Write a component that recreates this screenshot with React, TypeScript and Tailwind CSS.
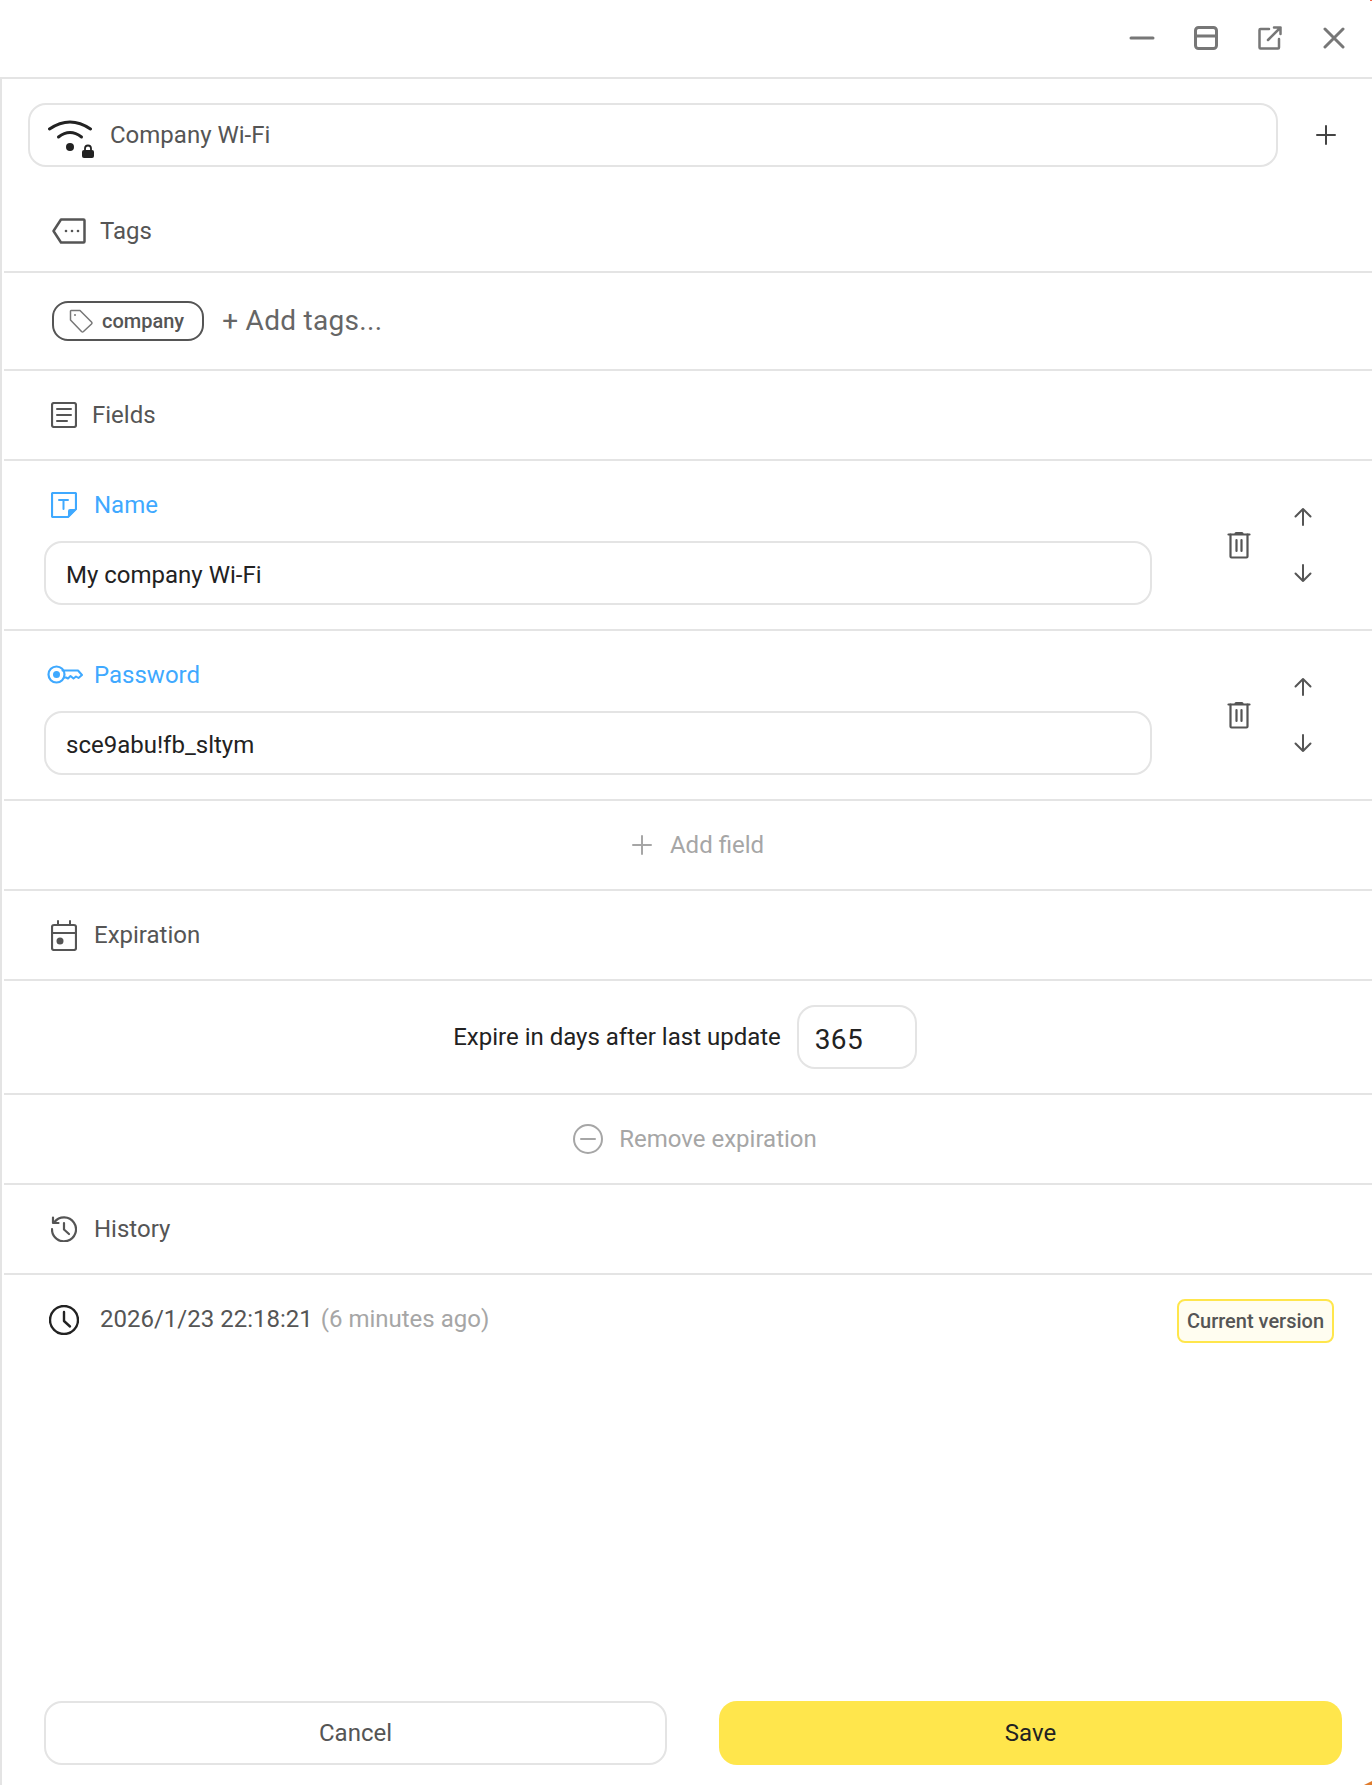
import React from 'react';

const IconBox: React.FC<{ w: number; h: number; className?: string; children: React.ReactNode }> = ({ w, h, className, children }) => (
  <svg width={w} height={h} viewBox={`0 0 ${w} ${h}`} fill="none" stroke="currentColor" strokeWidth={2} strokeLinecap="round" strokeLinejoin="round" className={className}>
    {children}
  </svg>
);

const WifiLockIcon = () => (
  <IconBox w={46} h={38} className="text-[#222] shrink-0 mt-[15px]">
    <path d="M1.500 9Q22 -5 42.500 9" strokeWidth={3} />
    <path d="M10.500 17Q22 8 33.500 17" strokeWidth={3} />
    <circle cx={22} cy={27} r={4} fill="currentColor" stroke="none" />
    <path d="M37 31v-2.500a3 3 0 0 1 6 0V31" strokeWidth={1.8} />
    <rect x={34} y={30} width={12} height={8} rx={2} fill="currentColor" stroke="none" />
  </IconBox>
);

const TagsIcon = () => (
  <IconBox w={34} h={26} className="text-[#555] shrink-0 ml-[1px]">
    <path d="M9 1.500H31.500a1 1 0 0 1 1 1V23.500a1 1 0 0 1-1 1H9L1.500 13Z" strokeWidth={2.500} />
    <circle cx={14} cy={13} r={1.300} fill="currentColor" stroke="none" />
    <circle cx={20} cy={13} r={1.300} fill="currentColor" stroke="none" />
    <circle cx={26} cy={13} r={1.300} fill="currentColor" stroke="none" />
  </IconBox>
);

const ChipTagIcon = () => (
  <IconBox w={24} h={24} className="text-[#777] shrink-0">
    <path d="M2 1.500H11L22.500 13a1.500 1.500 0 0 1 0 2L14.500 22.500a1.500 1.500 0 0 1-2 0L1.500 11V2Z" strokeWidth={1.5} />
    <circle cx={6} cy={6} r={1} fill="currentColor" stroke="none" />
  </IconBox>
);

const FieldsIcon = () => (
  <IconBox w={26} h={26} className="text-[#555] shrink-0">
    <rect x={1} y={1} width={24} height={24} rx={2} strokeWidth={2.200} />
    <path d="M6 7H20M6 13H20M6 19H16" />
  </IconBox>
);

const NameIcon = () => (
  <IconBox w={26} h={26} className="text-[#3fa9ff] shrink-0">
    <path d="M2 1H24a1 1 0 0 1 1 1V17L17 25H2a1 1 0 0 1-1-1V2a1 1 0 0 1 1-1Z" strokeWidth={2.200} />
    <path d="M25 17V18L18 25H17V19a2 2 0 0 1 2-2Z" fill="currentColor" stroke="none" />
    <path d="M8 8H17M12.500 8V17" />
  </IconBox>
);

const KeyIcon = () => (
  <IconBox w={36} h={20} className="text-[#3fa9ff] shrink-0">
    <path d="M15.500 5.500H31L35 10L31.500 13L29 11.500L26.500 13.500L23.500 11L21 13.500L19 12.500H17" />
    <circle cx={9.500} cy={9.500} r={8} strokeWidth={2.200} />
    <circle cx={9.500} cy={9.500} r={3.500} fill="currentColor" stroke="none" />
  </IconBox>
);

const TrashIcon = () => (
  <IconBox w={24} h={28} className="text-[#555]">
    <path d="M1.500 3.500H22.500" strokeWidth={2.200} />
    <path d="M9 2.500H15" strokeWidth={3} />
    <path d="M3.500 3.500V25.500a1 1 0 0 0 1 1H19.500a1 1 0 0 0 1-1V3.500" strokeWidth={2.200} />
    <path d="M9.500 9V20M14.500 9V20" strokeWidth={2.200} />
  </IconBox>
);

const ArrowIcon: React.FC<{ down?: boolean }> = ({ down }) => (
  <IconBox w={20} h={20} className="text-[#555]">
    {down ? <path d="M10 2V18M2.500 10.500L10 18L17.500 10.500" /> : <path d="M10 18V2M2.500 9.500L10 2L17.500 9.500" />}
  </IconBox>
);

const CalendarIcon = () => (
  <IconBox w={26} h={31} className="text-[#555] shrink-0">
    <rect x={1} y={5} width={24} height={25} rx={2} strokeWidth={2.200} />
    <path d="M1 13H25M7 1V5M19 1V5" />
    <circle cx={9} cy={21} r={3.500} fill="currentColor" stroke="none" />
  </IconBox>
);

const HistoryIcon = () => (
  <IconBox w={26} h={26} className="text-[#555] shrink-0">
    <path d="M3.500 6A12 12 0 1 1 1 13" strokeWidth={2.200} />
    <path d="M2 1.500V7H7.500" strokeWidth={2.200} />
    <path d="M13 7V13.500L18 18" strokeWidth={2.200} />
  </IconBox>
);

const ClockIcon = () => (
  <IconBox w={30} h={30} className="text-[#222] shrink-0">
    <circle cx={15} cy={15} r={14} strokeWidth={2.400} />
    <path d="M15 7V16L21 21.500" strokeWidth={2.400} />
  </IconBox>
);

const SectionRow: React.FC<{ icon: React.ReactNode; label: string; gap: string; h?: string }> = ({ icon, label, gap, h = 'h-[90px]' }) => (
  <div className={`${h} border-b-2 border-[#e4e4e4] flex items-center pl-[47px] text-[24px] text-[#555] ${gap}`}>
    {icon}
    <span>{label}</span>
  </div>
);

const FieldRow: React.FC<{ icon: React.ReactNode; label: string; value: string; gap: string }> = ({ icon, label, value, gap }) => (
  <div className="h-[170px] border-b-2 border-[#e4e4e4] flex items-center pl-[40px]">
    <div className="w-[1108px] flex flex-col gap-[23px] pt-[6px]">
      <div className={`h-[26px] mt-[1px] flex items-center text-[24px] text-[#3fa9ff] ${gap}`}>
        {icon}
        <span>{label}</span>
      </div>
      <div className="h-[64px] border-2 border-[#e4e4e4] rounded-[18px] flex items-center pl-[20px] pt-[4px] text-[24px] text-[#222]">{value}</div>
    </div>
    <div className="ml-[75px] w-[24px] flex justify-center">
      <TrashIcon />
    </div>
    <div className="ml-[42px] flex flex-col gap-[36px]">
      <ArrowIcon />
      <ArrowIcon down />
    </div>
  </div>
);

export default function App() {
  return (
    <div className="relative w-[1372px] h-[1785px] bg-white flex flex-col font-['Roboto',sans-serif]">
      {/* desktop showing through the window corners */}
      <div className="absolute top-0 right-0 w-[2px] h-[1px] bg-[#f0654a]" />
      <svg width={8} height={4} viewBox="0 0 8 4" className="absolute bottom-0 right-0">
        <path d="M0 4L8 0V4Z" fill="#e07a2a" />
      </svg>

      <header className="h-[79px] shrink-0 border-b-2 border-[#e4e4e4] flex items-center justify-end pr-[18px] pb-[2px] gap-[24px] text-[#777]">
        <div className="w-[40px] flex justify-center">
          <IconBox w={26} h={4}>
            <path d="M2 2H24" strokeWidth={3} />
          </IconBox>
        </div>
        <div className="w-[40px] flex justify-center">
          <IconBox w={24} h={24}>
            <rect x={1.500} y={1.500} width={21} height={21} rx={3} strokeWidth={3} />
            <path d="M1.500 10H22.500" strokeWidth={3} />
          </IconBox>
        </div>
        <div className="w-[40px] flex justify-center">
          <IconBox w={24} h={24}>
            <path d="M11 3H2.500a1 1 0 0 0-1 1V21.500a1 1 0 0 0 1 1H20a1 1 0 0 0 1-1V13" strokeWidth={2.500} />
            <path d="M16 1.500H22.500V8M22.500 1.500L10 14" strokeWidth={2.500} />
          </IconBox>
        </div>
        <div className="w-[40px] flex justify-center">
          <IconBox w={22} h={22}>
            <path d="M2 2L20 20M20 2L2 20" strokeWidth={3} />
          </IconBox>
        </div>
      </header>

      <main className="flex-1 flex flex-col border-l-2 border-[#e4e4e4] pl-[2px]">
        <div className="h-[111px] shrink-0 flex items-start pt-[24px] pl-[24px]">
          <div className="w-[1250px] h-[64px] border-2 border-[#e4e4e4] rounded-[18px] flex items-start pl-[18px] gap-[16px] text-[24px] text-[#555]">
            <WifiLockIcon />
            <span className="leading-[60px]">Company Wi-Fi</span>
          </div>
          <div className="ml-[38px] h-[64px] flex items-center">
            <IconBox w={20} h={20} className="text-[#444]">
              <path d="M10 1V19M1 10H19" />
            </IconBox>
          </div>
        </div>

        <SectionRow icon={<TagsIcon />} label="Tags" gap="gap-[14px]" h="h-[83px]" />

        <div className="h-[98px] border-b-2 border-[#e4e4e4] flex items-center pl-[48px] gap-[18px]">
          <div className="h-[40px] border-2 border-[#555] rounded-[16px] flex items-center pl-[15px] pr-[18px] gap-[9px] text-[20px] font-medium text-[#555]">
            <ChipTagIcon />
            <span>company</span>
          </div>
          <span className="text-[28px] tracking-[0.3px] text-[#666]">+ Add tags...</span>
        </div>

        <SectionRow icon={<FieldsIcon />} label="Fields" gap="gap-[15px]" />

        <FieldRow icon={<NameIcon />} label="Name" value="My company Wi-Fi" gap="gap-[17px] pl-[7px]" />
        <FieldRow icon={<KeyIcon />} label="Password" value="sce9abu!fb_sltym" gap="gap-[11px] pl-[3px]" />

        <div className="h-[90px] border-b-2 border-[#e4e4e4] flex items-center justify-center pl-[20px] gap-[18px] text-[24px] text-[#a6a6a6]">
          <IconBox w={20} h={20} className="text-[#a6a6a6]">
            <path d="M10 1V19M1 10H19" />
          </IconBox>
          <span>Add field</span>
        </div>

        <SectionRow icon={<CalendarIcon />} label="Expiration" gap="gap-[17px]" />

        <div className="h-[114px] border-b-2 border-[#e4e4e4] flex items-center justify-center pr-[6px] gap-[16px]">
          <span className="text-[24px] text-[#222]">Expire in days after last update</span>
          <div className="w-[120px] h-[64px] border-2 border-[#e4e4e4] rounded-[18px] flex items-center pl-[16px] pt-[6px] text-[28px] tracking-[0.3px] text-[#222]">365</div>
        </div>

        <div className="h-[90px] border-b-2 border-[#e4e4e4] flex items-center justify-center pl-[14px] gap-[16px] text-[24px] text-[#a6a6a6]">
          <IconBox w={30} h={30} className="text-[#a6a6a6]">
            <circle cx={15} cy={15} r={14} />
            <path d="M8 15H22" />
          </IconBox>
          <span>Remove expiration</span>
        </div>

        <SectionRow icon={<HistoryIcon />} label="History" gap="gap-[17px]" />

        <div className="flex-1 flex items-start pt-[24px] pl-[45px] pr-[38px]">
          <div className="h-[42px] flex items-center flex-1 text-[24px] text-[#555]">
            <ClockIcon />
            <span className="ml-[21px] mb-[2px]">2026/1/23 22:18:21</span>
            <span className="ml-[8px] mb-[2px] text-[#a6a6a6]">(6 minutes ago)</span>
          </div>
          <div className="h-[44px] w-[157px] border-2 border-[#ffe64c] rounded-[8px] bg-[#fffdf0] flex items-center justify-center text-[20px] font-medium text-[#555]">Current version</div>
        </div>

        <div className="flex pl-[40px] pr-[30px] pb-[20px] gap-[52px]">
          <div className="w-[623px] h-[64px] border-2 border-[#e4e4e4] rounded-[18px] flex items-center justify-center text-[24px] text-[#555]">Cancel</div>
          <div className="w-[623px] h-[64px] bg-[#ffe64c] rounded-[18px] flex items-center justify-center text-[24px] text-[#222]">Save</div>
        </div>
      </main>
    </div>
  );
}
